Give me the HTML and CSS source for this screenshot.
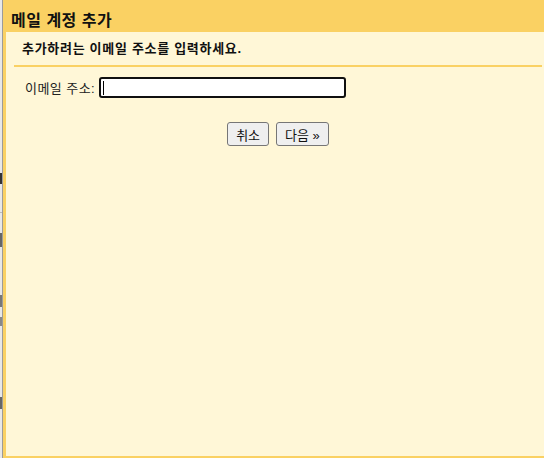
FILE: index.html
```html
<!DOCTYPE html>
<html>
<head>
    <title>메일 계정 추가</title>
    <link rel="stylesheet" href="styles.css">
</head>
<body>
    <div class="behind">
        <span class="mark mark-text"></span>
        <span class="mark mark-line"></span>
        <span class="mark mark-block"></span>
        <span class="mark mark-small"></span>
        <span class="mark mark-small2"></span>
        <span class="mark mark-block2"></span>
    </div>
    <div class="dialog">
        <div class="title">메일 계정 추가</div>
        <div class="content">
            <div class="intro">추가하려는 이메일 주소를 입력하세요.</div>
            <form class="field" onsubmit="return false">
                <label for="email">이메일 주소:</label>
                <span class="input-wrap">
                    <input type="text" id="email" class="email">
                    <span class="caret"></span>
                </span>
            </form>
            <div class="actions">
                <button type="button">취소</button>
                <button type="button">다음 &raquo;</button>
            </div>
        </div>
    </div>
</body>
</html>
```

FILE: styles.css
```css
body {
    margin: 0;
    height: 458px;
    display: flex;
    overflow: hidden;
    font-family: "Liberation Sans", "Noto Sans CJK KR", sans-serif;
    font-size: 13px;
    color: #222;
}

.behind {
    width: 2px;
    background-color: #e8e8e8;
    border-right: 1px solid #9b9b9b;
    display: flex;
    flex-direction: column;
}

.mark {
    display: block;
    width: 2px;
    background-color: #555;
}

.mark-text {
    margin-top: 173px;
    height: 11px;
    background-color: #333;
}

.mark-line {
    margin-top: 28px;
    height: 1px;
    background-color: #bbb;
}

.mark-block {
    margin-top: 20px;
    height: 14px;
    background-color: #666;
}

.mark-small {
    margin-top: 48px;
    height: 12px;
    background-color: #777;
}

.mark-small2 {
    margin-top: 10px;
    height: 9px;
    background-color: #888;
}

.mark-block2 {
    margin-top: 71px;
    height: 12px;
    background-color: #666;
}

.dialog {
    flex: 1;
    display: flex;
    flex-direction: column;
    background-color: #fff7d7;
    border-left: 3px solid #fad163;
    border-bottom: 2px solid #fad163;
    box-sizing: border-box;
}

.title {
    height: 32px;
    box-sizing: border-box;
    padding: 5px 5px 0;
    display: flex;
    align-items: center;
    background-color: #fad163;
    font-size: 16px;
    font-weight: bold;
    letter-spacing: 0.5px;
    color: #111;
}

.content {
    margin: 0 2px 0 8px;
}

.intro {
    padding: 9px 8px 8px;
    line-height: 16px;
    font-weight: bold;
    letter-spacing: 0.7px;
    color: #111;
    border-bottom: 2px solid #fad163;
}

.field {
    margin: 10px 0 0;
    padding-left: 11px;
    display: flex;
    align-items: center;
}

.field label {
    margin-right: 4px;
    letter-spacing: 0.45px;
}

.input-wrap {
    position: relative;
    display: flex;
}

.email {
    width: 247px;
    height: 21px;
    box-sizing: border-box;
    margin: 0;
    padding: 1px 4px;
    border: 2px solid #101010;
    border-radius: 3px;
    background-color: #fff;
    outline: none;
    font-size: 13px;
}

.caret {
    position: absolute;
    left: 4px;
    top: 4px;
    width: 1px;
    height: 14px;
    background-color: #000;
}

.actions {
    margin-top: 24px;
    display: flex;
    justify-content: center;
    gap: 7px;
}

.actions button {
    height: 24px;
    padding: 0 8px;
    font-family: inherit;
    font-size: 13px;
    color: #111;
    background-color: #efefef;
    border: 1px solid #767676;
    border-radius: 3px;
}
```
